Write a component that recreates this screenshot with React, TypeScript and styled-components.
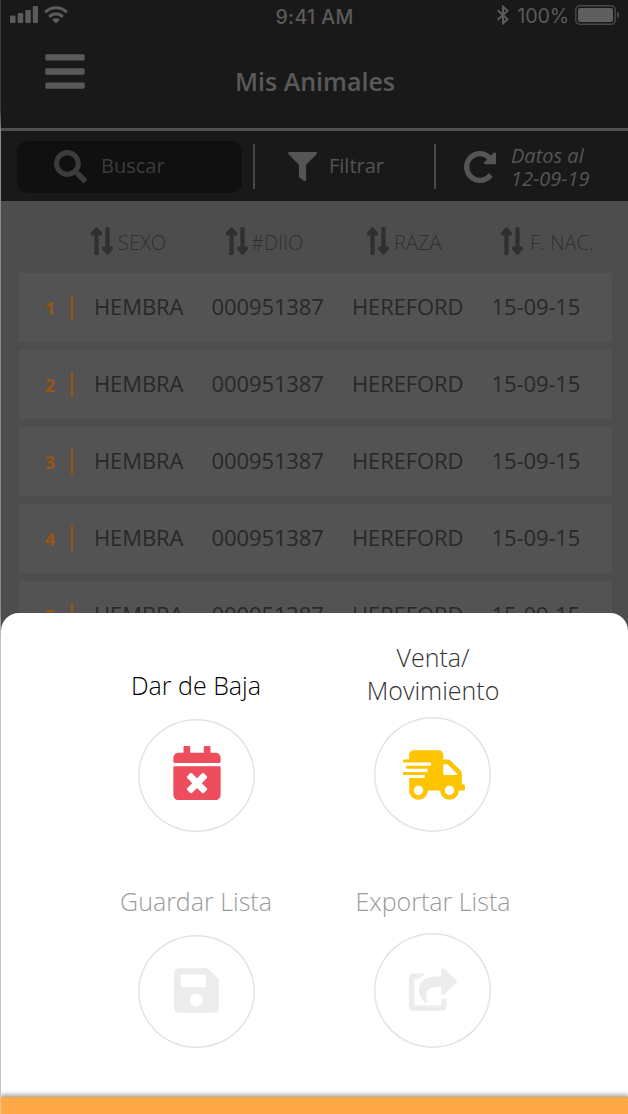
import React from 'react';
import styled, { createGlobalStyle } from 'styled-components';
import {
  FaBars,
  FaSearch,
  FaFilter,
  FaLongArrowAltUp,
  FaLongArrowAltDown,
  FaCalendarTimes,
  FaShippingFast,
  FaSave,
  FaShareSquare,
} from 'react-icons/fa';

const GlobalStyle = createGlobalStyle`
  * { box-sizing: border-box; }
  body { margin: 0; background: #fff; font-family: 'Open Sans', sans-serif; }
  svg { display: block; flex: none; }
`;

const Screen = styled.div`
  position: relative;
  width: 628px;
  height: 1114px;
  overflow: hidden;
  padding-left: 1px;
  background: linear-gradient(#35413e 0, #35413e 110px, #8a8a8a 130px, #8a8a8a 610px, #c4c4c4 640px, #c4c4c4 1092px, #f3c08a 1097px);
`;

const Page = styled.div`
  height: 100%;
  background: #4d4d4d;
`;

const StatusBar = styled.div`
  display: grid;
  grid-template-columns: 1fr auto 1fr;
  align-items: center;
  height: 32px;
  padding: 0 8px 0 9px;
  background: #191919;
  color: #5b5b5b;
  font-family: Inter, sans-serif;
`;

const StatusGroup = styled.div<{ $end?: boolean }>`
  display: flex;
  align-items: center;
  justify-content: ${(p) => (p.$end ? 'flex-end' : 'flex-start')};
  gap: 6px;
  margin-top: -2px;
`;

const Clock = styled.span`
  font-size: 19.5px;
  font-weight: 500;
  line-height: 24px;
  margin: 2px 1px 0 0;
  letter-spacing: 0.4px;
`;

const Percent = styled.span`
  font-size: 19.8px;
  line-height: 24px;
  margin: 1px 0 0 2px;
  letter-spacing: -0.2px;
`;

const TitleBar = styled.header`
  position: relative;
  display: flex;
  align-items: center;
  justify-content: center;
  height: 99px;
  padding-top: 1px;
  background: #191919;
  border-bottom: 3px solid #505050;
  color: #5a5a5a;
`;

const MenuButton = styled.div`
  position: absolute;
  left: 44px;
  top: 17px;
`;

const Title = styled.h1`
  margin: 0 0 0 1px;
  font-size: 25px;
  line-height: 32px;
  font-weight: 600;
`;

const Toolbar = styled.div`
  display: flex;
  align-items: center;
  height: 70px;
  padding-left: 16px;
  background: #191919;
  color: #555;
`;

const SearchBox = styled.div`
  display: flex;
  align-items: center;
  width: 225px;
  height: 52px;
  margin-top: 2px;
  padding: 0 0 2px 37px;
  gap: 14px;
  border-radius: 10px;
  background: #101010;
  color: #3c3c3c;
`;

const ToolLabel = styled.span`
  font-size: 20px;
  line-height: 26px;
`;

const Divider = styled.div`
  width: 2px;
  height: 45px;
  margin-top: 1px;
  background: #484848;
`;

const FilterButton = styled.div`
  display: flex;
  align-items: center;
  gap: 12px;
  width: 179px;
  padding-left: 33px;
`;

const RefreshButton = styled.div`
  display: flex;
  align-items: center;
  gap: 15px;
  padding: 2px 0 0 28px;
`;

const DateLine = styled.span`
  display: block;
  font-size: 20px;
  line-height: 23px;
  font-style: italic;
`;

const ColumnHeads = styled.div`
  display: grid;
  grid-template-columns: 135px 141px 134px 1fr;
  height: 72px;
  padding: 26px 0 0 90px;
  color: #303030;
`;

const ColumnHead = styled.div<{ $gap: number }>`
  display: flex;
  align-items: flex-start;
  gap: ${(p) => p.$gap}px;
  font-size: 20px;
  line-height: 32px;
  font-weight: 330;
  white-space: nowrap;
`;

const SortArrows = styled.div`
  display: flex;
  width: 22px;
  height: 28px;
  svg { width: 11px; height: 28px; }
`;

const List = styled.div`
  display: flex;
  flex-direction: column;
  gap: 8px;
  padding: 0 16px 0 18px;
`;

const Row = styled.div`
  display: grid;
  grid-template-columns: 26px 23px 117.5px 140.5px 139.5px 1fr;
  align-items: center;
  height: 69px;
  padding-left: 26px;
  background: #535353;
  color: #282828;
  font-size: 22px;
  font-weight: 370;
  line-height: 30px;
  letter-spacing: -0.1px;
`;

const Cell = styled.span`
  margin-top: -3px;
`;

const RowNumber = styled.span`
  color: #9a5412;
  font-size: 18px;
  font-weight: 700;
  margin-top: 0;
`;

const RowRule = styled.div`
  width: 1.5px;
  height: 25px;
  background: #9a5412;
`;

const Sheet = styled.section`
  position: absolute;
  left: 1px;
  right: 0;
  bottom: 0;
  height: 501px;
  display: flex;
  flex-direction: column;
  border-radius: 18px 18px 0 0;
  background: #fff;
  overflow: hidden;
`;

const ActionGrid = styled.div`
  display: grid;
  grid-template-columns: 236px 236px;
  grid-template-rows: 219px 216px;
  justify-content: center;
  flex: 1;
  padding-right: 1px;
`;

const Action = styled.div<{ $color: string }>`
  display: flex;
  flex-direction: column;
  align-items: center;
  justify-content: flex-end;
  color: ${(p) => p.$color};
`;

const ActionLabel = styled.span<{ $color: string; $gap: number; $indent?: number }>`
  color: ${(p) => p.$color};
  font-size: 25px;
  line-height: 33px;
  font-weight: 300;
  text-align: center;
  padding-left: ${(p) => p.$indent ?? 0}px;
  margin-bottom: ${(p) => p.$gap}px;
`;

const Circle = styled.div<{ $height: number; $left?: number; $lift?: number }>`
  display: flex;
  align-items: center;
  justify-content: center;
  width: 117px;
  height: ${(p) => p.$height}px;
  padding-left: ${(p) => p.$left ?? 0}px;
  padding-bottom: ${(p) => p.$lift ?? 0}px;
  box-shadow: inset 0 0 0 1.5px #e3e3e3;
  border-radius: 50%;
`;

const BottomBar = styled.div`
  height: 17px;
  background: #ffa846;
  box-shadow: 0 -1px 5px 1px rgba(0, 0, 0, 0.42);
`;

const Signal = () => (
  <svg width="28" height="18" viewBox="0 0 28 18" fill="currentColor">
    <rect x="0" y="9.5" width="5.5" height="7.5" rx="1" />
    <rect x="7.7" y="7" width="5.5" height="10" rx="1" />
    <rect x="15.3" y="4" width="5.5" height="13" rx="1" />
    <rect x="22.8" y="0" width="5.2" height="17" rx="1" />
  </svg>
);

const Wifi = () => (
  <svg width="24" height="18" viewBox="0 0 24 18" fill="none" stroke="currentColor" strokeWidth="3.2">
    <path d="M1.2 6.4C7.5.2 16.5.2 22.8 6.4" />
    <path d="M5.2 10.8C9.2 7 14.8 7 18.8 10.8" />
    <path d="M12 17.5 8.2 13.7C10.4 11.8 13.6 11.8 15.8 13.7Z" fill="currentColor" stroke="none" />
  </svg>
);

const Bluetooth = () => (
  <svg width="12" height="20" viewBox="0 0 12 20" fill="none" stroke="currentColor" strokeWidth="2">
    <path d="M.7 5.2 10.5 14.3 6 18.3V1.7L10.5 5.7.7 14.8" />
  </svg>
);

const Battery = () => (
  <svg width="45" height="20" viewBox="0 0 45 20">
    <rect x=".8" y=".8" width="39.4" height="18.4" rx="4" fill="none" stroke="#484848" strokeWidth="1.5" />
    <rect x="3" y="3" width="35" height="14" rx="2" fill="#5f5f5f" />
    <path d="M42 6.5C45 8 45 12 42 13.5Z" fill="#484848" />
  </svg>
);

const Refresh = () => (
  <svg width="32" height="32" viewBox="128 128 1536 1536" fill="currentColor">
    <path d="M1664 256v448q0 26-19 45t-45 19h-448q-42 0-59-40-17-39 14-69l138-138q-148-137-349-137-104 0-198.500 40.500t-163.500 109.500-109.500 163.500-40.500 198.500 40.500 198.500 109.500 163.500 163.500 109.500 198.500 40.500q119 0 225-52t179-147q7-10 23-12 15 0 25 9l137 138q9 8 9.500 20.500t-7.500 22.500q-109 132-264 204.500t-327 72.500q-156 0-298-61t-245-164-164-245-61-298 61-298 164-245 245-164 298-61q147 0 284.500 55.500t244.500 156.500l130-129q29-31 70-14 39 17 39 59z" />
  </svg>
);

const columns = [
  { label: 'SEXO', gap: 5 },
  { label: '#DIIO', gap: 3 },
  { label: 'RAZA', gap: 5 },
  { label: 'F. NAC.', gap: 7 },
];

const rows = [1, 2, 3, 4, 5].map((id) => ({
  id,
  sexo: 'HEMBRA',
  diio: '000951387',
  raza: 'HEREFORD',
  fecha: '15-09-15',
}));

export default function App() {
  return (
    <>
      <GlobalStyle />
      <Screen>
        <Page>
          <StatusBar>
            <StatusGroup>
              <Signal />
              <Wifi />
            </StatusGroup>
            <Clock>9:41 AM</Clock>
            <StatusGroup $end>
              <Bluetooth />
              <Percent>100%</Percent>
              <Battery />
            </StatusGroup>
          </StatusBar>
          <TitleBar>
            <MenuButton>
              <FaBars style={{ width: 40, height: 45 }} />
            </MenuButton>
            <Title>Mis Animales</Title>
          </TitleBar>
          <Toolbar>
            <SearchBox>
              <FaSearch size={33} />
              <ToolLabel>Buscar</ToolLabel>
            </SearchBox>
            <Divider style={{ marginLeft: 11 }} />
            <FilterButton>
              <FaFilter size={29} />
              <ToolLabel>Filtrar</ToolLabel>
            </FilterButton>
            <Divider />
            <RefreshButton>
              <Refresh />
              <div>
                <DateLine>Datos al</DateLine>
                <DateLine>12-09-19</DateLine>
              </div>
            </RefreshButton>
          </Toolbar>
          <ColumnHeads>
            {columns.map((c) => (
              <ColumnHead key={c.label} $gap={c.gap}>
                <SortArrows>
                  <FaLongArrowAltUp viewBox="24 32 208 448" preserveAspectRatio="none" />
                  <FaLongArrowAltDown viewBox="24 32 208 448" preserveAspectRatio="none" />
                </SortArrows>
                {c.label}
              </ColumnHead>
            ))}
          </ColumnHeads>
          <List>
            {rows.map((r) => (
              <Row key={r.id}>
                <RowNumber>{r.id}</RowNumber>
                <RowRule />
                <Cell>{r.sexo}</Cell>
                <Cell>{r.diio}</Cell>
                <Cell>{r.raza}</Cell>
                <Cell>{r.fecha}</Cell>
              </Row>
            ))}
          </List>
        </Page>
        <Sheet>
          <ActionGrid>
            <Action $color="#ed4d5c">
              <ActionLabel $color="#000" $gap={17}>Dar de Baja</ActionLabel>
              <Circle $height={113} $left={2} $lift={5}>
                <FaCalendarTimes style={{ width: 48, height: 54 }} />
              </Circle>
            </Action>
            <Action $color="#ffc400">
              <ActionLabel $color="#333" $gap={10} $indent={2}>
                Venta/
                <br />
                Movimiento
              </ActionLabel>
              <Circle $height={115} $left={3}>
                <FaShippingFast style={{ width: 62, height: 50 }} />
              </Circle>
            </Action>
            <Action $color="#ececec">
              <ActionLabel $color="#9a9a9a" $gap={17}>Guardar Lista</ActionLabel>
              <Circle $height={113} $left={1} $lift={2}>
                <FaSave style={{ width: 45, height: 51 }} />
              </Circle>
            </Action>
            <Action $color="#ececec">
              <ActionLabel $color="#9a9a9a" $gap={15} $indent={2}>Exportar Lista</ActionLabel>
              <Circle $height={115} $left={1} $lift={2}>
                <FaShareSquare style={{ width: 48, height: 43 }} />
              </Circle>
            </Action>
          </ActionGrid>
          <BottomBar />
        </Sheet>
      </Screen>
    </>
  );
}
